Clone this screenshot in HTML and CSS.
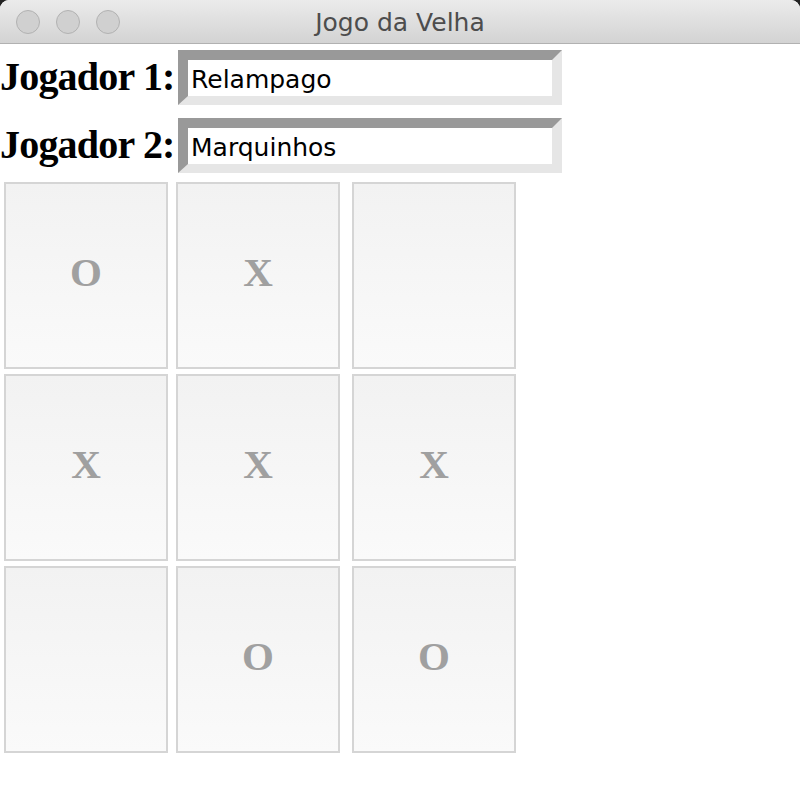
FILE: index.html
```html
<!DOCTYPE html>
<html lang="pt">
<head>
<meta charset="utf-8">
<title>Jogo da Velha</title>
<link rel="stylesheet" href="styles.css">
</head>
<body>
<div class="window">
  <div class="titlebar">
    <div class="lights">
      <span class="light"></span>
      <span class="light"></span>
      <span class="light"></span>
    </div>
    <div class="title">Jogo da Velha</div>
    <div></div>
  </div>
  <div class="content">
    <div class="players">
      <div class="player">
        <label class="label" for="p1">Jogador 1:</label>
        <input class="field" id="p1" type="text" value="Relampago">
      </div>
      <div class="player">
        <label class="label" for="p2">Jogador 2:</label>
        <input class="field" id="p2" type="text" value="Marquinhos">
      </div>
    </div>
    <div class="board">
      <button class="cell">O</button>
      <button class="cell">X</button>
      <button class="cell"></button>
      <button class="cell">X</button>
      <button class="cell">X</button>
      <button class="cell">X</button>
      <button class="cell"></button>
      <button class="cell">O</button>
      <button class="cell">O</button>
    </div>
  </div>
</div>
</body>
</html>
```

FILE: styles.css
```css
html, body {
  margin: 0;
  padding: 0;
  background: #232323;
}

.window {
  width: 800px;
  height: 804px;
  background: #ffffff;
  border-radius: 9px 9px 0 0;
  overflow: hidden;
}

.titlebar {
  height: 43px;
  border-bottom: 1px solid #b1b1b1;
  background: linear-gradient(#ebebeb, #d3d3d3);
  display: grid;
  grid-template-columns: 1fr auto 1fr;
  align-items: center;
}

.lights {
  display: flex;
  gap: 16px;
  padding-left: 16px;
}

.light {
  width: 22px;
  height: 22px;
  border-radius: 50%;
  background: #d0d0d0;
  border: 1px solid #b2b2b2;
}

.title {
  font-family: "DejaVu Sans", sans-serif;
  font-size: 25px;
  color: #4d4d4d;
  padding-top: 1px;
}

.content {
  padding-top: 6px;
}

.players {
  display: flex;
  flex-direction: column;
  gap: 13px;
}

.player {
  display: flex;
  align-items: center;
  height: 55px;
}

.label {
  width: 178px;
  font-family: "Liberation Serif", "Times New Roman", serif;
  font-weight: bold;
  font-size: 40px;
  letter-spacing: -0.8px;
  color: #000;
  white-space: nowrap;
  padding-bottom: 3px;
}

.field {
  box-sizing: border-box;
  width: 384px;
  height: 55px;
  margin: 0;
  border-style: solid;
  border-width: 10px 10px 9px 10px;
  border-color: #999999 #e6e6e6 #e6e6e6 #999999;
  background: #ffffff;
  padding: 2px 0 0 3px;
  font-family: "DejaVu Sans", sans-serif;
  font-size: 25px;
  color: #000;
  outline: none;
}

.board {
  margin-top: 9px;
  padding-left: 4px;
  display: grid;
  grid-template-columns: 172px 176px 164px;
  grid-auto-rows: 187px;
  row-gap: 5px;
}

.cell {
  box-sizing: border-box;
  width: 164px;
  height: 187px;
  margin: 0;
  padding: 0 0 8px 0;
  border: 2px solid #d5d5d5;
  background: linear-gradient(#f2f2f2, #fafafa);
  font-family: "Liberation Serif", "Times New Roman", serif;
  font-weight: bold;
  font-size: 41px;
  color: #a0a0a0;
  display: flex;
  align-items: center;
  justify-content: center;
}
```
